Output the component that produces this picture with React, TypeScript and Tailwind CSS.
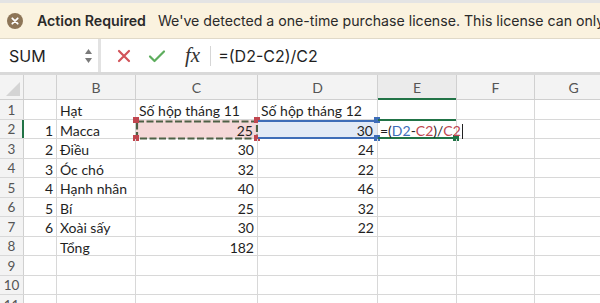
const cols = [
  { key: "A", w: "w-[33px]", align: "text-right" },
  { key: "B", w: "w-[79px]", align: "text-left" },
  { key: "C", w: "w-[122px]", align: "text-right" },
  { key: "D", w: "w-[120px]", align: "text-right" },
  { key: "E", w: "w-[79px]", align: "text-left" },
  { key: "F", w: "w-[78px]", align: "text-left" },
  { key: "G", w: "w-[78px]", align: "text-left" },
];

const rows: (string | number)[][] = [
  ["", "Hạt", "Số hộp tháng 11", "Số hộp tháng 12"],
  [1, "Macca", 25, 30],
  [2, "Điều", 30, 24],
  [3, "Óc chó", 32, 22],
  [4, "Hạnh nhân", 40, 46],
  [5, "Bí", 25, 32],
  [6, "Xoài sấy", 30, 22],
  ["", "Tổng", 182, ""],
  [],
  [],
  [],
];

function Cell({ r, c, value }: { r: number; c: number; value: string | number | undefined }) {
  const col = cols[c];
  const isHeaderText = r === 0 && (c === 2 || c === 3);
  const base = `relative h-full shrink-0 border-r border-[#d8d8d8] ${col.w} ${isHeaderText ? "text-left" : col.align}`;

  if (r === 1 && c === 2) {
    return (
      <div className={`${base} bg-[#f5d8d8]`}>
        <svg className="absolute -left-[1px] top-0" width="124" height="20" viewBox="0 0 124 20">
          <rect x="2" y="1.5" width="120" height="17" fill="none" stroke="#4e6046" strokeWidth="2.2" strokeDasharray="7 2.5" />
        </svg>
        <span className="absolute -left-[3px] -top-[3px] h-[6px] w-[6px] bg-[#c0464f]" />
        <span className="absolute -right-[3px] -top-[3px] h-[6px] w-[6px] bg-[#c0464f]" />
        <span className="absolute -left-[3px] -bottom-[3px] h-[6px] w-[6px] bg-[#c0464f]" />
        <span className="absolute -right-[3px] -bottom-[3px] h-[6px] w-[6px] bg-[#c0464f]" />
        <span className="relative block pr-[4px] pt-[1px] leading-[19px]">{value}</span>
      </div>
    );
  }
  if (r === 1 && c === 3) {
    return (
      <div className={`${base} bg-[#e2eaf6]`}>
        <div className="absolute inset-x-0 top-0 -bottom-[1px] border-y-2 border-[#3e6db8]" />
        <span className="absolute -right-[3px] -top-[3px] h-[6px] w-[6px] bg-[#3e6db8]" />
        <span className="absolute -right-[3px] -bottom-[3px] h-[6px] w-[6px] bg-[#3e6db8]" />
        <span className="relative block pr-[4px] pt-[1px] leading-[19px]">{value}</span>
      </div>
    );
  }
  if (r === 1 && c === 4) {
    return (
      <div className={`${base}`}>
        <div className="absolute inset-x-0 -top-[1px] -bottom-[1px] border-y-2 border-[#217346]" />
        <span className="absolute -right-[3px] -bottom-[3px] h-[6px] w-[6px] bg-[#217346]" />
        <span className="relative block whitespace-nowrap pl-[2px] pt-[1px] leading-[19px]">
          =(<span className="text-[#3e6db8]">D2</span>-<span className="text-[#c0464f]">C2</span>)/
          <span className="text-[#c0464f]">C2</span>
          <span className="ml-[1px] inline-block h-[15px] w-[1px] translate-y-[3px] bg-[#222]" />
        </span>
      </div>
    );
  }
  return (
    <div
      className={`${base} ${col.align === "text-right" && !isHeaderText ? "pr-[3px]" : "pl-[3px]"} overflow-visible whitespace-nowrap pt-[1px] leading-[19px]`}
    >
      {value}
    </div>
  );
}

export default function App() {
  return (
    <div className="h-[303px] w-[600px] overflow-hidden bg-white font-['Lato','Liberation_Sans',sans-serif] text-[#1f1f1f]">
      <div className="h-[3px] bg-[#e4e4e4]" />
      {/* banner */}
      <div className="flex h-[36px] items-center gap-[10px] whitespace-nowrap border-b border-[#e0d9c8] bg-[#faf2df] pl-[7px] font-['Inter','Liberation_Sans',sans-serif] text-[14.15px]">
        <svg width="16" height="16" viewBox="0 0 16 16" className="shrink-0">
          <circle cx="8" cy="8" r="8" fill="#8d7557" />
          <path d="M5.3 5.3 10.7 10.7M10.7 5.3 5.3 10.7" stroke="#fff" strokeWidth="1.8" strokeLinecap="round" />
        </svg>
        <span className="ml-[4px] font-semibold text-[#2a2a2a]">Action Required</span>
        <span className="ml-[2px] text-[#2a2a2a]">We've detected a one-time purchase license. This license can only be used</span>
      </div>
      {/* formula bar */}
      <div className="flex h-[33px] items-center bg-white font-['Inter','Liberation_Sans',sans-serif]">
        <div className="flex h-full w-[98px] shrink-0 items-center justify-between pl-[9px] pr-[6px]">
          <span className="text-[16px] text-[#1f1f1f]">SUM</span>
          <div className="flex flex-col gap-[4px]">
            <svg width="7" height="5" viewBox="0 0 7 5">
              <path d="M3.5 0 7 5 0 5Z" fill="#7a7a7a" />
            </svg>
            <svg width="7" height="5" viewBox="0 0 7 5">
              <path d="M0 0 7 0 3.5 5Z" fill="#7a7a7a" />
            </svg>
          </div>
        </div>
        <div className="h-full w-[3px] bg-[#e2e2e2]" />
        <div className="ml-[16px] flex items-center">
          <svg width="14" height="14" viewBox="0 0 14 14">
            <path d="M2 2 12 12M12 2 2 12" stroke="#d2545a" strokeWidth="2.2" strokeLinecap="round" />
          </svg>
          <svg width="18" height="14" viewBox="0 0 18 14" className="ml-[17px]">
            <path d="M2 7.5 6.5 12 16 2.5" stroke="#5dad5d" strokeWidth="2.2" fill="none" strokeLinecap="round" strokeLinejoin="round" />
          </svg>
          <span className="ml-[19px] font-['Liberation_Serif',serif] text-[21px] italic leading-none text-[#333]">fx</span>
          <div className="ml-[10px] h-[20px] w-[1px] bg-[#d6d6d6]" />
          <span className="ml-[7px] text-[16px] text-[#1f1f1f]">=(D2-C2)/C2</span>
        </div>
      </div>
      <div className="h-[3px] bg-[#d9d9d9]" />
      {/* column headers */}
      <div className="flex h-[25px] border-b border-[#cfcfcf] bg-[#f3f3f3] text-[14px] text-[#555]">
        <div className="relative h-full w-[24px] shrink-0 border-r border-[#d0d0d0]">
          <svg width="14" height="14" viewBox="0 0 14 14" className="absolute bottom-[3px] right-[3px]">
            <path d="M14 0 14 14 0 14Z" fill="#d4d4d4" />
          </svg>
        </div>
        {cols.map((c) => (
          <div
            key={c.key}
            className={`relative flex h-full shrink-0 items-center justify-center border-r border-[#d0d0d0] ${c.w} ${c.key === "E" ? "bg-[#ebebeb]" : ""}`}
          >
            {c.key === "A" ? "" : c.key}
            {c.key === "E" && <span className="absolute inset-x-0 -bottom-[1px] h-[2px] bg-[#217346]" />}
          </div>
        ))}
      </div>
      {/* rows */}
      {rows.map((row, r) => (
        <div key={r} className="flex h-[19.5px] border-b border-[#d8d8d8] text-[14px]">
          <div
            className={`relative flex h-full w-[24px] shrink-0 items-center justify-center border-r border-[#d0d0d0] bg-[#f3f3f3] pt-[1px] text-[13.5px] text-[#555] ${r === 1 ? "bg-[#e8e8e8]" : ""}`}
          >
            {r + 1}
            {r === 1 && <span className="absolute -right-[1px] inset-y-0 w-[2px] bg-[#217346]" />}
          </div>
          {cols.map((c, ci) => (
            <Cell key={c.key} r={r} c={ci} value={row[ci]} />
          ))}
        </div>
      ))}
    </div>
  );
}
